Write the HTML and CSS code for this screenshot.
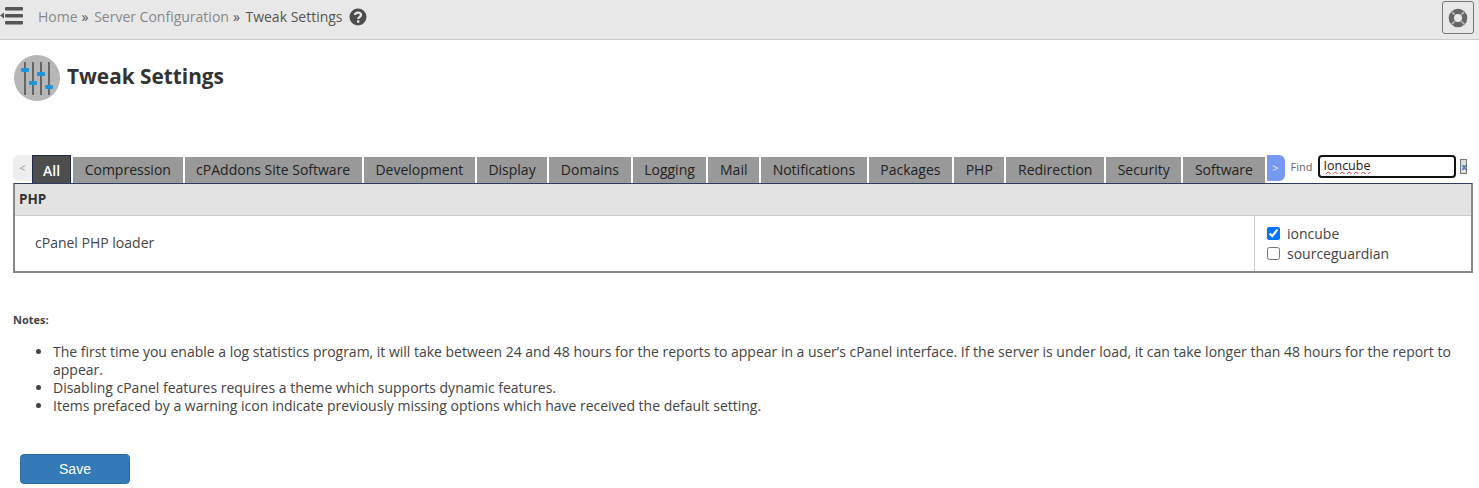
FILE: index.html
```html
<!DOCTYPE html>
<html lang="en">
<head>
<meta charset="utf-8">
<title>Tweak Settings</title>
<link rel="stylesheet" href="styles.css">
</head>
<body>
<header class="topbar">
  <svg class="menu-icon" width="24" height="20" viewBox="0 0 24 20"><path class="ic" d="M0 9.500 L4 6.500 V12.500 Z"/><rect class="ic" x="5" y="1" width="18" height="3.500" rx="1"/><rect class="ic" x="5" y="8" width="18" height="3.500" rx="1"/><rect class="ic" x="5" y="15" width="18" height="3.500" rx="1"/></svg>
  <nav class="crumbs">
    <a>Home</a><span class="sep">»</span><a>Server Configuration</a><span class="sep">»</span><span class="current">Tweak Settings</span>
    <svg class="help" width="18" height="18" viewBox="0 0 18 18"><circle cx="9" cy="9" r="8.500" fill="#4d4d4d"/><path d="M6 7 C6 3.800 12 3.800 12 7 C12 9 9.200 9 9.200 11" fill="none" stroke="#e8e8e8" stroke-width="2.200"/><rect x="8" y="12.300" width="2.400" height="2.400" fill="#e8e8e8"/></svg>
  </nav>
  <button class="support" type="button" aria-label="Support">
    <svg width="20" height="20" viewBox="0 0 20 20"><circle cx="10" cy="10" r="9.300" fill="#666"/><circle cx="10" cy="10" r="4" fill="#e8e8e8"/><g stroke="#bbb" stroke-width="1.600"><path d="M3.800 3.800 L6.600 6.600"/><path d="M16.200 3.800 L13.400 6.600"/><path d="M3.800 16.200 L6.600 13.400"/><path d="M16.200 16.200 L13.400 13.400"/></g></svg>
  </button>
</header>

<div class="title">
  <svg class="title-icon" width="46" height="46" viewBox="0 0 46 46">
    <circle cx="23" cy="23" r="23" fill="#b7b7b7"/>
    <g fill="#666"><rect x="10" y="7" width="2" height="33"/><rect x="18" y="7" width="2" height="33"/><rect x="26" y="7" width="2" height="33"/><rect x="34" y="7" width="2" height="33"/></g>
    <g fill="#1f96dc"><rect x="7" y="13" width="8" height="4" rx="1"/><rect x="15" y="26" width="8" height="4" rx="1"/><rect x="23" y="17" width="8" height="4" rx="1"/><rect x="31" y="30" width="8" height="4" rx="1"/></g>
  </svg>
  <h1>Tweak Settings</h1>
</div>

<div class="tabrow">
  <span class="arrow left">&lt;</span>
  <span class="tab active">All</span>
  <span class="tab">Compression</span>
  <span class="tab">cPAddons Site Software</span>
  <span class="tab">Development</span>
  <span class="tab">Display</span>
  <span class="tab">Domains</span>
  <span class="tab">Logging</span>
  <span class="tab">Mail</span>
  <span class="tab">Notifications</span>
  <span class="tab">Packages</span>
  <span class="tab">PHP</span>
  <span class="tab">Redirection</span>
  <span class="tab">Security</span>
  <span class="tab">Software</span>
  <span class="arrow right">&gt;</span>
  <label class="find">Find<input class="find-input" type="text" value="Ioncube"></label>
  <span class="clear">x</span>
</div>

<section class="panel">
  <div class="panel-head">PHP</div>
  <div class="panel-row">
    <div class="setting">cPanel PHP loader</div>
    <div class="options">
      <label class="opt"><input type="checkbox" checked>ioncube</label>
      <label class="opt"><input type="checkbox">sourceguardian</label>
    </div>
  </div>
</section>

<section class="notes">
  <div class="notes-label">Notes:</div>
  <ul>
    <li>The first time you enable a log statistics program, it will take between 24 and 48 hours for the reports to appear in a user’s cPanel interface. If the server is under load, it can take longer than 48 hours for the report to appear.</li>
    <li>Disabling cPanel features requires a theme which supports dynamic features.</li>
    <li>Items prefaced by a warning icon indicate previously missing options which have received the default setting.</li>
  </ul>
</section>

<button class="save" type="button">Save</button>
</body>
</html>
```

FILE: styles.css
```css
* { box-sizing: border-box; }
html, body { margin: 0; padding: 0; }
body { background: #fff; color: #333; font-family: "Open Sans", sans-serif; font-size: 14px; overflow: hidden; }
.topbar { height: 40px; background: #e8e8e8; border-bottom: 1px solid #ccc; display: flex; align-items: center; padding-right: 5px; }
.ic { fill: #555; }
.menu-icon { flex: none; margin-bottom: 7px; }
.crumbs { display: flex; align-items: center; margin-left: 14px; flex: 1; font-size: 14px; line-height: 20px; margin-bottom: 5px; }
.crumbs a { color: #888; }
.sep { color: #555; margin: 0 5.600px 0 4px; }
.current { color: #555; }
.help { margin-left: 6px; }
.support { width: 32px; height: 33px; padding: 0; background: #e8e8e8; border: 1px solid #777; border-radius: 3px; display: flex; align-items: center; justify-content: center; margin-bottom: 4px; }
.title { display: flex; align-items: center; margin: 15px 0 0 14px; }
h1 { margin: 0 0 4px 7px; font-size: 20.800px; font-weight: 700; color: #333; line-height: 28px; }
.tabrow { display: flex; align-items: flex-end; height: 29px; margin: 53px 0 0 13px; position: relative; }
.tab { height: 26px; padding: 0 11.600px; margin-left: 2px; background: #999; color: #222; line-height: 26px; white-space: nowrap; }
.tab.active { height: 28px; line-height: 29px; margin-left: 0; padding: 0 10px; background: #4d4d4d; color: #fff; border: 1px solid #1f2a44; border-bottom: 0; font-weight: 600; }
.arrow { font-size: 11px; line-height: 26px; height: 26px; text-align: center; align-self: flex-start; margin-top: 1px; }
.arrow.left { width: 19px; background: #eee; color: #999; border-radius: 6px 0 0 6px; }
.arrow.right { width: 18px; margin-left: 2px; background: #7799f0; color: #eee; border-radius: 0 6px 6px 0; }
.find { display: flex; align-items: center; font-size: 11px; color: #666; margin-left: 6px; align-self: flex-start; height: 24px; }
.find-input { width: 138px; height: 23px; margin-left: 6px; padding: 0 3px 2px; border: 2px solid #111; border-radius: 4px; font: 12.500px "Open Sans", sans-serif; color: #222; text-decoration: underline wavy #d33 1px; outline: none; }
.clear { align-self: flex-start; width: 7px; height: 15px; margin: 5px 0 0 4px; background: #ddd; border: 1px solid #777; color: #2a7fd0; font-size: 9px; line-height: 13px; text-align: center; font-weight: 700; }
.panel { margin: 0 6px 0 13px; border: 2px solid #888; border-top-color: #2c3e60; border-top-width: 1px; }
.panel-head { height: 32px; background: #e3e3e3; border-bottom: 1px solid #ccc; font-weight: 700; line-height: 30px; padding-left: 4px; font-size: 13.500px; }
.panel-row { display: flex; height: 55px; }
.setting { flex: 1; padding-left: 20px; line-height: 54px; color: #444; }
.options { width: 217px; border-left: 1px solid #ccc; padding: 7px 0 0 12px; }
.opt { display: flex; align-items: center; height: 20px; color: #444; }
.opt input { width: 13px; height: 13px; margin: 0 7px 0 0; accent-color: #0075ff; }
.notes { margin: 39px 0 0 13px; }
.notes-label { font-size: 11px; font-weight: 700; line-height: 15px; color: #444; }
.notes ul { margin: 16px 20px 0 0; padding-left: 40px; line-height: 18px; color: #444; font-size: 14px; letter-spacing: -0.010px; }
.save { display: block; width: 110px; height: 30px; margin: 39px 0 0 20px; padding: 0; background: #337ab7; border: 1px solid #2e6da4; border-radius: 4px; color: #fff; font: 14px "Liberation Sans", Arial, sans-serif; }
```
